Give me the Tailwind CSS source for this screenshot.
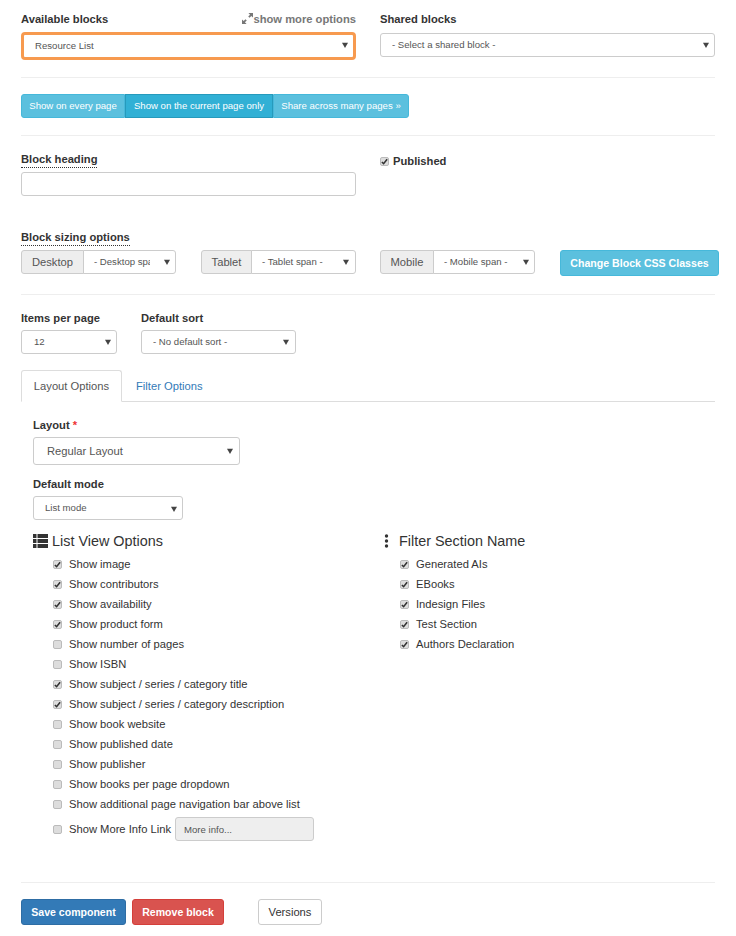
<!DOCTYPE html>
<html lang="en">
<head>
  <meta charset="UTF-8">
  <meta name="viewport" content="width=device-width, initial-scale=1">
  <title>Edit block</title>
  <script src="https://cdn.jsdelivr.net/npm/@tailwindcss/browser@4"></script>
</head>
<body class="bg-white text-[#333] font-['Liberation_Sans',Arial,sans-serif] text-[11.2px] leading-[20px]">

  <div class="w-[736px] h-[936px] overflow-hidden pl-[21px] pr-[21px] pt-[9px]">

    <!-- block selects -->
    <div class="grid grid-cols-[335px_335px] gap-x-[24px]">
      <div>
        <div class="flex justify-between h-[20px]">
          <label class="font-bold">Available blocks</label>
          <span class="flex items-center font-bold text-[#777]">
            <svg width="11" height="11" viewBox="0 0 12 12" class="mb-[2px]" fill="#777"><path d="M7 0h5v5l-1.8-1.8-2 2-1.4-1.4 2-2zM0 12V7l1.8 1.8 2-2 1.4 1.4-2 2L5 12z"/></svg>show more options
          </span>
        </div>
        <div class="relative mt-[3px] h-[28px]">
          <select class="appearance-none w-full h-[28px] pl-[11px] rounded-[4px] bg-white text-[9.6px] text-[#555] border-[3px] border-[#f79a4f] outline-none">
            <option>Resource List</option>
          </select>
          <svg width="6" height="6" viewBox="0 0 8 8" class="absolute right-[8px] top-[10px] pointer-events-none" fill="#444"><path d="M0 1h8L4 8z"/></svg>
        </div>
      </div>
      <div>
        <label class="block font-bold h-[20px]">Shared blocks</label>
        <div class="relative mt-[4px] h-[24px]">
          <select class="appearance-none w-full h-[24px] pl-[11px] rounded-[3px] bg-white text-[9.6px] text-[#555] border border-[#ccc]">
            <option>- Select a shared block -</option>
          </select>
          <svg width="6" height="6" viewBox="0 0 8 8" class="absolute right-[6px] top-[9px] pointer-events-none" fill="#444"><path d="M0 1h8L4 8z"/></svg>
        </div>
      </div>
    </div>

    <hr class="mt-[17px] border-[#eee] w-[694px]">

    <!-- share scope -->
    <div class="flex mt-[16px] h-[24px] text-[9.6px] text-white">
      <button class="w-[104px] rounded-l-[3px] bg-[#5bc0de] border border-[#46b8da]">Show on every page</button>
      <button class="w-[148px] bg-[#31b0d5] border border-[#269abc]">Show on the current page only</button>
      <button class="w-[136px] rounded-r-[3px] bg-[#5bc0de] border border-[#46b8da]">Share across many pages »</button>
    </div>

    <hr class="mt-[17px] border-[#eee] w-[694px]">

    <!-- heading -->
    <div class="grid grid-cols-[335px_335px] gap-x-[24px] mt-[13px]">
      <div>
        <label class="block w-fit font-bold h-[19px] border-b border-dotted border-[#333]">Block heading</label>
        <input type="text" class="block mt-[4px] w-full h-[24px] rounded-[3px] border border-[#ccc] bg-white">
      </div>
      <label class="flex items-center gap-[4px] h-[24px] font-bold">
        <span class="flex items-center justify-center w-[9px] h-[9px] rounded-[2px] bg-[#ddd] border border-[#bbb]"><svg width="7" height="7" viewBox="0 0 8 8" fill="none" stroke="#333" stroke-width="1.8"><path d="M1 4.5 3 6.5 7 1.5"/></svg></span>
        Published
      </label>
    </div>

    <!-- sizing -->
    <label class="block w-fit mt-[31px] font-bold h-[19px] border-b border-dotted border-[#333]">Block sizing options</label>
    <div class="flex items-start mt-[4px] h-[26px]">
      <div class="relative flex shrink-0 w-[155px] h-[24px]">
        <span class="flex items-center justify-center w-[63px] bg-[#eee] border border-[#ccc] rounded-l-[3px] text-[#555]">Desktop</span>
        <select class="appearance-none w-[93px] h-[24px] pl-[10px] pr-[25px] -ml-px rounded-r-[3px] bg-white text-[9.6px] text-[#555] border border-[#ccc]">
          <option>- Desktop span -</option>
        </select>
        <svg width="6" height="6" viewBox="0 0 8 8" class="absolute right-[6px] top-[9px] pointer-events-none" fill="#444"><path d="M0 1h8L4 8z"/></svg>
      </div>
      <div class="relative flex shrink-0 w-[155px] h-[24px] ml-[25px]">
        <span class="flex items-center justify-center w-[51px] bg-[#eee] border border-[#ccc] rounded-l-[3px] text-[#555]">Tablet</span>
        <select class="appearance-none w-[105px] h-[24px] pl-[10px] -ml-px rounded-r-[3px] bg-white text-[9.6px] text-[#555] border border-[#ccc]">
          <option>- Tablet span -</option>
        </select>
        <svg width="6" height="6" viewBox="0 0 8 8" class="absolute right-[7px] top-[9px] pointer-events-none" fill="#444"><path d="M0 1h8L4 8z"/></svg>
      </div>
      <div class="relative flex shrink-0 w-[155px] h-[24px] ml-[24px]">
        <span class="flex items-center justify-center w-[54px] bg-[#eee] border border-[#ccc] rounded-l-[3px] text-[#555]">Mobile</span>
        <select class="appearance-none w-[102px] h-[24px] pl-[10px] -ml-px rounded-r-[3px] bg-white text-[9.6px] text-[#555] border border-[#ccc]">
          <option>- Mobile span -</option>
        </select>
        <svg width="6" height="6" viewBox="0 0 8 8" class="absolute right-[6px] top-[9px] pointer-events-none" fill="#444"><path d="M0 1h8L4 8z"/></svg>
      </div>
      <button class="shrink-0 w-[159px] h-[26px] ml-[25px] rounded-[3px] bg-[#5bc0de] border border-[#46b8da] text-white font-bold text-[10.6px]">Change Block CSS Classes</button>
    </div>

    <hr class="mt-[18px] border-[#eee] w-[694px]">

    <!-- paging -->
    <div class="flex gap-[24px] mt-[13px]">
      <div class="w-[96px]">
        <label class="block font-bold h-[20px]">Items per page</label>
        <div class="relative mt-[2px] h-[24px]">
          <select class="appearance-none w-full h-[24px] pl-[12px] rounded-[3px] bg-white text-[9.6px] text-[#555] border border-[#ccc]">
            <option>12</option>
          </select>
          <svg width="6" height="6" viewBox="0 0 8 8" class="absolute right-[6px] top-[9px] pointer-events-none" fill="#444"><path d="M0 1h8L4 8z"/></svg>
        </div>
      </div>
      <div class="w-[155px]">
        <label class="block font-bold h-[20px]">Default sort</label>
        <div class="relative mt-[2px] h-[24px]">
          <select class="appearance-none w-full h-[24px] pl-[11px] rounded-[3px] bg-white text-[9.6px] text-[#555] border border-[#ccc]">
            <option>- No default sort -</option>
          </select>
          <svg width="6" height="6" viewBox="0 0 8 8" class="absolute right-[7px] top-[9px] pointer-events-none" fill="#444"><path d="M0 1h8L4 8z"/></svg>
        </div>
      </div>
    </div>

    <!-- tabs -->
    <div class="flex w-[694px] h-[32px] mt-[16px] border-b border-[#ddd]">
      <a class="flex items-center justify-center w-[101px] h-[32px] bg-white border border-[#ddd] border-b-white rounded-t-[3px] text-[#555]">Layout Options</a>
      <a class="flex items-center px-[14px] h-[31px] text-[#337ab7]">Filter Options</a>
    </div>

    <div class="pl-[12px]">
      <label class="block mt-[13px] h-[20px] font-bold">Layout <span class="text-[#e33]">*</span></label>
      <div class="relative mt-[2px] w-[207px] h-[28px]">
        <select class="appearance-none w-full h-[28px] pl-[13px] rounded-[3px] bg-white text-[#555] border border-[#ccc]">
          <option>Regular Layout</option>
        </select>
        <svg width="6" height="6" viewBox="0 0 8 8" class="absolute right-[7px] top-[11px] pointer-events-none" fill="#444"><path d="M0 1h8L4 8z"/></svg>
      </div>

      <label class="block mt-[9px] h-[20px] font-bold">Default mode</label>
      <div class="relative mt-[2px] w-[150px] h-[24px]">
        <select class="appearance-none w-full h-[24px] pl-[11px] rounded-[3px] bg-white text-[9.6px] text-[#555] border border-[#ccc]">
          <option>List mode</option>
        </select>
        <svg width="6" height="6" viewBox="0 0 8 8" class="absolute right-[6px] top-[10px] pointer-events-none" fill="#444"><path d="M0 1h8L4 8z"/></svg>
      </div>

      <div class="grid grid-cols-[347px_1fr] mt-[10px]">
        <!-- list view -->
        <div>
          <h4 class="flex items-center gap-[4px] h-[22px] text-[14.4px] text-[#333]">
            <svg width="15" height="14" viewBox="0 0 15 14" fill="#333" class="mb-[1px]"><path d="M0 0h3.5v4H0zM4.5 0H15v4H4.5zM0 5h3.5v4H0zM4.5 5H15v4H4.5zM0 10h3.5v4H0zM4.5 10H15v4H4.5z"/></svg>
            List View Options
          </h4>
          <ul id="listOptions" class="mt-[2px] pl-[20px]"></ul>
          <div class="flex items-center h-[24px] mt-[3px] pl-[20px]">
            <span class="w-[9px] h-[9px] rounded-[2px] bg-[#ddd] border border-[#bbb]"></span>
            <span class="ml-[7px]">Show More Info Link</span>
            <input type="text" value="More info..." disabled class="w-[139px] h-[24px] ml-[4px] pl-[8px] rounded-[3px] bg-[#eee] border border-[#ccc] text-[9.6px] text-[#555]">
          </div>
        </div>
        <!-- filters -->
        <div>
          <h4 class="flex items-center h-[22px] text-[14.4px] text-[#333]">
            <svg width="6" height="14" viewBox="0 0 6 14" fill="#333" class="mb-[1px] ml-[4px] mr-[9px]"><circle cx="2.5" cy="2" r="1.7"/><circle cx="2.5" cy="7" r="1.7"/><circle cx="2.5" cy="12" r="1.7"/></svg>
            Filter Section Name
          </h4>
          <ul id="filterOptions" class="mt-[2px] pl-[20px]"></ul>
        </div>
      </div>
    </div>

    <hr class="mt-[41px] border-[#eee] w-[694px]">

    <div class="flex mt-[16px] h-[26px] font-bold text-[10.56px]">
      <button class="w-[105px] rounded-[3px] bg-[#337ab7] border border-[#2e6da4] text-white">Save component</button>
      <button class="w-[92px] ml-[6px] rounded-[3px] bg-[#d9534f] border border-[#d43f3a] text-white">Remove block</button>
      <button class="w-[64px] ml-[34px] rounded-[3px] bg-white border border-[#ccc] text-[#333] font-normal text-[11.2px]">Versions</button>
    </div>
  </div>

  <script>
    const listOptions = [
      ["Show image", true],
      ["Show contributors", true],
      ["Show availability", true],
      ["Show product form", true],
      ["Show number of pages", false],
      ["Show ISBN", false],
      ["Show subject / series / category title", true],
      ["Show subject / series / category description", true],
      ["Show book website", false],
      ["Show published date", false],
      ["Show publisher", false],
      ["Show books per page dropdown", false],
      ["Show additional page navigation bar above list", false],
    ];
    const filterOptions = [
      ["Generated AIs", true],
      ["EBooks", true],
      ["Indesign Files", true],
      ["Test Section", true],
      ["Authors Declaration", true],
    ];
    const tick = '<svg width="7" height="7" viewBox="0 0 8 8" fill="none" stroke="#333" stroke-width="1.8"><path d="M1 4.5 3 6.5 7 1.5"/></svg>';

    function renderRows(id, rows) {
      document.getElementById(id).innerHTML = rows.map(([label, checked]) => `
        <li class="flex items-center h-[20px]">
          <span class="flex items-center justify-center w-[9px] h-[9px] rounded-[2px] bg-[#ddd] border border-[#bbb]">${checked ? tick : ""}</span>
          <span class="ml-[7px]">${label}</span>
        </li>`).join("");
    }

    renderRows("listOptions", listOptions);
    renderRows("filterOptions", filterOptions);
  </script>

</body>
</html>
